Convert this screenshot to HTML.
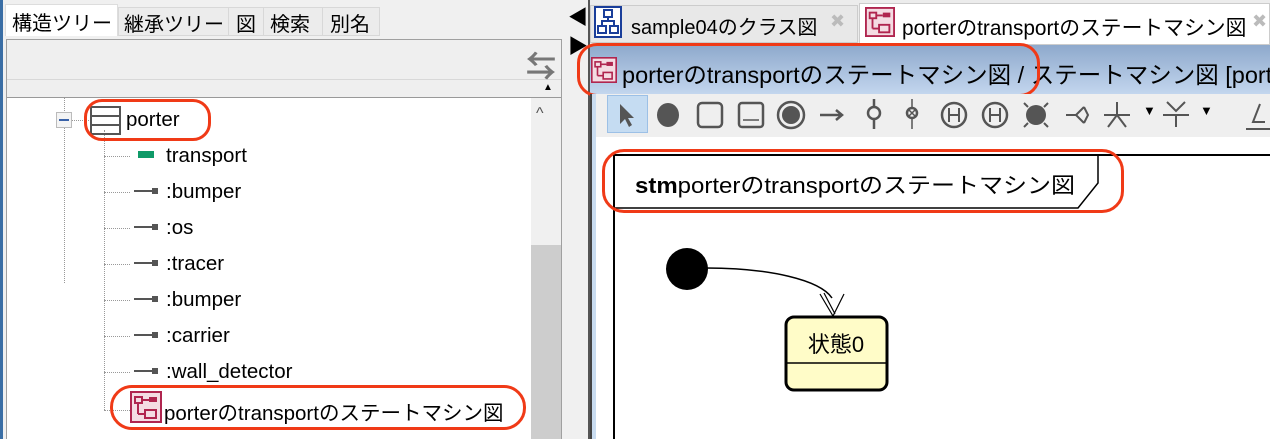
<!DOCTYPE html>
<html><head><meta charset="utf-8"><style>
*{margin:0;padding:0;box-sizing:border-box}
body{width:1270px;height:439px;overflow:hidden;background:#f0f0f0;position:relative;font-family:"Liberation Sans","Noto Sans CJK JP",sans-serif;color:#000}
.a{position:absolute}
.t{position:absolute;font-size:20.5px;white-space:nowrap}
.ell{position:absolute;border:3px solid #f03a17;border-radius:18px}
</style></head><body>
<div class="a" style="left:0;top:0;width:3px;height:439px;background:#3a6ea5"></div>
<div class="a" style="left:5px;top:4px;width:113px;height:32px;background:#fff;border:1px solid #ddd;border-bottom:none"></div>
<div class="t" style="left:12px;top:7px;font-size:20px">構造ツリー</div>
<div class="a" style="left:118px;top:7px;width:262px;height:29px;background:#ececec;border:1px solid #d8d8d8"></div>
<div class="a" style="left:228px;top:7px;width:1px;height:29px;background:#d8d8d8"></div>
<div class="a" style="left:263px;top:7px;width:1px;height:29px;background:#d8d8d8"></div>
<div class="a" style="left:322px;top:7px;width:1px;height:29px;background:#d8d8d8"></div>
<div class="t" style="left:124px;top:8px;font-size:20px">継承ツリー</div>
<div class="t" style="left:236px;top:8px;font-size:20px">図</div>
<div class="t" style="left:270px;top:8px;font-size:20px">検索</div>
<div class="t" style="left:330px;top:8px;font-size:20px">別名</div>
<div class="a" style="left:6px;top:39px;width:556px;height:400px;border:1px solid #a0a0a0;background:#efefef"></div>
<div class="a" style="left:7px;top:79px;width:554px;height:1px;background:#d8d8d8"></div>
<div class="t" style="left:526px;top:42px;font-size:30px;color:#777;font-weight:bold">⇆</div>
<div class="t" style="left:543px;top:82px;font-size:10px">▲</div>
<div class="a" style="left:7px;top:97px;width:554px;height:1px;background:#999"></div>
<div class="a" style="left:7px;top:98px;width:524px;height:341px;background:#fff"></div>
<div class="a" style="left:531px;top:98px;width:30px;height:341px;background:#f0f0f0"></div>
<div class="a" style="left:531px;top:245px;width:30px;height:194px;background:#cdcdcd"></div>
<div class="t" style="left:536px;top:105px;font-size:16px;color:#555">^</div>
<div class="a" style="left:64px;top:98px;height:185px;border-left:1px dotted #999"></div>
<div class="a" style="left:104px;top:130px;height:280px;border-left:1px dotted #999"></div>
<div class="a" style="left:56px;top:112px;width:16px;height:16px;background:#f4f4f4;border:1px solid #bbb"></div>
<div class="a" style="left:59px;top:119px;width:10px;height:2px;background:#3a62a8"></div>
<div class="a" style="left:72px;top:120px;width:17px;border-top:1px dotted #999"></div>
<div class="a" style="left:90px;top:106px;width:31px;height:29px;border:2px solid #555"></div>
<div class="a" style="left:90px;top:115px;width:31px;height:2px;background:#555"></div>
<div class="a" style="left:90px;top:124px;width:31px;height:2px;background:#555"></div>
<div class="t" style="left:126px;top:108px">porter</div>
<div class="a" style="left:104px;top:156px;width:26px;border-top:1px dotted #999"></div>
<div class="a" style="left:138px;top:151px;width:16px;height:7px;background:#0f9a68"></div>
<div class="t" style="left:166px;top:144px">transport</div>
<div class="a" style="left:104px;top:192px;width:26px;border-top:1px dotted #999"></div><div class="a" style="left:134px;top:190px;width:18px;height:2px;background:#555"></div><div class="a" style="left:152px;top:188px;width:6px;height:6px;background:#555"></div><div class="t" style="left:166px;top:180px">:bumper</div>
<div class="a" style="left:104px;top:228px;width:26px;border-top:1px dotted #999"></div><div class="a" style="left:134px;top:226px;width:18px;height:2px;background:#555"></div><div class="a" style="left:152px;top:224px;width:6px;height:6px;background:#555"></div><div class="t" style="left:166px;top:216px">:os</div>
<div class="a" style="left:104px;top:264px;width:26px;border-top:1px dotted #999"></div><div class="a" style="left:134px;top:262px;width:18px;height:2px;background:#555"></div><div class="a" style="left:152px;top:260px;width:6px;height:6px;background:#555"></div><div class="t" style="left:166px;top:252px">:tracer</div>
<div class="a" style="left:104px;top:300px;width:26px;border-top:1px dotted #999"></div><div class="a" style="left:134px;top:298px;width:18px;height:2px;background:#555"></div><div class="a" style="left:152px;top:296px;width:6px;height:6px;background:#555"></div><div class="t" style="left:166px;top:288px">:bumper</div>
<div class="a" style="left:104px;top:336px;width:26px;border-top:1px dotted #999"></div><div class="a" style="left:134px;top:334px;width:18px;height:2px;background:#555"></div><div class="a" style="left:152px;top:332px;width:6px;height:6px;background:#555"></div><div class="t" style="left:166px;top:324px">:carrier</div>
<div class="a" style="left:104px;top:372px;width:26px;border-top:1px dotted #999"></div><div class="a" style="left:134px;top:370px;width:18px;height:2px;background:#555"></div><div class="a" style="left:152px;top:368px;width:6px;height:6px;background:#555"></div><div class="t" style="left:166px;top:360px">:wall_detector</div>
<div class="a" style="left:104px;top:410px;width:26px;border-top:1px dotted #999"></div>
<svg class="a" style="left:130px;top:391px" width="32" height="32" viewBox="0 0 32 32"><rect x="1" y="1" width="30" height="30" fill="#f4dce3" stroke="#b0254f" stroke-width="2"/><rect x="5" y="6" width="7" height="6" fill="none" stroke="#b0254f" stroke-width="2"/><rect x="19" y="6" width="8" height="5" fill="#b0254f"/><line x1="12" y1="9" x2="19" y2="9" stroke="#b0254f" stroke-width="2"/><line x1="8" y1="12" x2="8" y2="23" stroke="#b0254f" stroke-width="2"/><line x1="8" y1="23" x2="15" y2="23" stroke="#b0254f" stroke-width="2"/><rect x="15" y="19" width="11" height="8" fill="none" stroke="#b0254f" stroke-width="2"/></svg>
<div class="t" style="left:164px;top:396px;font-size:20.5px">porterのtransportのステートマシン図</div>
<div class="ell" style="left:84px;top:99px;width:127px;height:42px"></div>
<div class="ell" style="left:110px;top:385px;width:416px;height:45px;border-radius:22px"></div>

<div class="a" style="left:566px;top:0;width:20px;height:439px;background:#f0f0f0"></div>
<div class="a" style="left:588px;top:0;width:2px;height:439px;background:#555"></div>
<div class="t" style="left:568px;top:1px;font-size:20px">◀</div>
<div class="t" style="left:568px;top:30px;font-size:20px">▶</div>

<div class="a" style="left:590px;top:0;width:680px;height:45px;background:#ececec"></div>
<div class="a" style="left:590px;top:5px;width:268px;height:38px;background:#e8e8e8;border:1px solid #ccc"></div>
<svg class="a" style="left:594px;top:6px" width="28" height="32" viewBox="0 0 28 32"><rect x="1" y="1" width="26" height="30" fill="#fff" stroke="#1a3e9a" stroke-width="2"/><rect x="10" y="4" width="8" height="7" fill="none" stroke="#1a3e9a" stroke-width="2"/><rect x="4" y="20" width="8" height="7" fill="none" stroke="#1a3e9a" stroke-width="2"/><rect x="16" y="20" width="8" height="7" fill="none" stroke="#1a3e9a" stroke-width="2"/><path d="M14 11v4M8 20v-5h12v5" fill="none" stroke="#1a3e9a" stroke-width="2"/></svg>
<div class="t" style="left:631px;top:11px;font-size:20px">sample04のクラス図</div>
<div class="t" style="left:830px;top:11px;color:#bbb;font-size:18px">✖</div>
<div class="a" style="left:859px;top:3px;width:411px;height:42px;background:#fff;border:1px solid #ccc"></div>
<svg class="a" style="left:865px;top:7px" width="30" height="30" viewBox="0 0 32 32"><rect x="1" y="1" width="30" height="30" fill="#f4dce3" stroke="#b0254f" stroke-width="2"/><rect x="5" y="6" width="7" height="6" fill="none" stroke="#b0254f" stroke-width="2"/><rect x="19" y="6" width="8" height="5" fill="#b0254f"/><line x1="12" y1="9" x2="19" y2="9" stroke="#b0254f" stroke-width="2"/><line x1="8" y1="12" x2="8" y2="23" stroke="#b0254f" stroke-width="2"/><line x1="8" y1="23" x2="15" y2="23" stroke="#b0254f" stroke-width="2"/><rect x="15" y="19" width="11" height="8" fill="none" stroke="#b0254f" stroke-width="2"/></svg>
<div class="t" style="left:902px;top:11px;font-size:20.8px">porterのtransportのステートマシン図</div>
<div class="t" style="left:1252px;top:11px;color:#bbb;font-size:18px">✖</div>

<div class="a" style="left:590px;top:45px;width:680px;height:49px;background:linear-gradient(#8ea9cc,#c3d6ee)"></div>
<svg class="a" style="left:591px;top:56px" width="26" height="28" viewBox="0 0 32 32"><rect x="1" y="1" width="30" height="30" fill="#f4dce3" stroke="#b0254f" stroke-width="2"/><rect x="5" y="6" width="7" height="6" fill="none" stroke="#b0254f" stroke-width="2"/><rect x="19" y="6" width="8" height="5" fill="#b0254f"/><line x1="12" y1="9" x2="19" y2="9" stroke="#b0254f" stroke-width="2"/><line x1="8" y1="12" x2="8" y2="23" stroke="#b0254f" stroke-width="2"/><line x1="8" y1="23" x2="15" y2="23" stroke="#b0254f" stroke-width="2"/><rect x="15" y="19" width="11" height="8" fill="none" stroke="#b0254f" stroke-width="2"/></svg>
<div class="t" style="left:622px;top:56px;font-size:23.5px">porterのtransportのステートマシン図 / ステートマシン図 [porter</div>
<div class="ell" style="left:577px;top:43px;width:463px;height:54px;border-radius:20px"></div>

<div class="a" style="left:590px;top:94px;width:680px;height:43px;background:#efefef"></div>
<div class="a" style="left:607px;top:95px;width:41px;height:38px;background:#c5dcf2;border:1px solid #9cc0e6"></div>
<svg class="a" style="left:590px;top:94px" width="680" height="43" viewBox="0 0 680 43" fill="none" stroke="#555" stroke-width="2.5">
<path d="M30 10v20l5-5 4 8 3-2-4-7h6z" fill="#555" stroke="none"/>
<ellipse cx="78" cy="21" rx="11" ry="12" fill="#555" stroke="none"/>
<rect x="108" y="9" width="24" height="24" rx="4"/>
<rect x="149" y="9" width="24" height="24" rx="3"/><path d="M153 26h5M164 26h5M158 26h6" stroke-width="1.5"/>
<circle cx="201" cy="21" r="13"/><circle cx="201" cy="21" r="9" fill="#555" stroke="none"/>
<path d="M230 21h22M246 16l6 5-6 5"/>
<circle cx="284" cy="19" r="6"/><path d="M284 5v8M284 25v10"/>
<circle cx="322" cy="19" r="5"/><path d="M322 5v9M322 24v11M319 16l6 6M325 16l-6 6" stroke-width="1.5"/>
<circle cx="364" cy="21" r="12"/><path d="M359 14v14M369 14v14M359 21h10" stroke-width="2"/>
<circle cx="405" cy="21" r="12"/><path d="M400 14v14M410 14v14M400 21h10M413 12l2 3" stroke-width="2"/>
<circle cx="446" cy="21" r="10" fill="#555" stroke="none"/><path d="M434 9l4 4M458 9l-4 4M434 33l4-4M458 33l-4-4" stroke-width="2"/>
<path d="M476 21h10M486 21l8-8M486 21l8 8M494 13l4 8-4 8" stroke-width="2"/>
<path d="M514 21h26M527 8v13M527 21l-9 12M527 21l9 12" stroke-width="2"/>
<path d="M573 21h26M577 8l9 9 9-9M586 21v12" stroke-width="2"/>
<path d="M656 35h25M670 10l-7 18h12" stroke-width="2"/>
</svg>
<div class="t" style="left:1143px;top:103px;font-size:13px">▼</div>
<div class="t" style="left:1200px;top:103px;font-size:13px">▼</div>

<div class="a" style="left:590px;top:137px;width:680px;height:302px;background:#fff"></div>
<div class="a" style="left:590px;top:94px;width:6px;height:345px;background:#c9dcf0"></div>
<div class="a" style="left:590px;top:94px;width:2px;height:345px;background:#444"></div>
<svg class="a" style="left:590px;top:137px" width="680" height="302" viewBox="590 137 680 302">
<path d="M614 439V155H1270" fill="none" stroke="#000" stroke-width="2"/>
<path d="M614 208H1078L1098 183V155" fill="none" stroke="#000" stroke-width="1.5"/>
<circle cx="687" cy="269" r="21" fill="#000"/>
<path d="M706 268C770 268 820 280 832 298" fill="none" stroke="#000" stroke-width="1.5"/>
<path d="M820 294L833 316L844 294M824 293L835 314" fill="none" stroke="#000" stroke-width="1.2"/>
<rect x="786" y="317" width="101" height="73" rx="8" fill="#fffcc8" stroke="#000" stroke-width="3"/>
<line x1="787" y1="363" x2="886" y2="363" stroke="#000" stroke-width="1.5"/>
<text x="635" y="193" font-family="Liberation Sans,Noto Sans CJK JP,sans-serif" font-size="22" textLength="440" lengthAdjust="spacingAndGlyphs"><tspan font-weight="bold">stm</tspan>porterのtransportのステートマシン図</text>
<text x="836" y="352" text-anchor="middle" font-family="Liberation Sans,Noto Sans CJK JP,sans-serif" font-size="22">状態0</text>
</svg>
<div class="ell" style="left:602px;top:149px;width:522px;height:64px;border-radius:22px"></div>
</body></html>
